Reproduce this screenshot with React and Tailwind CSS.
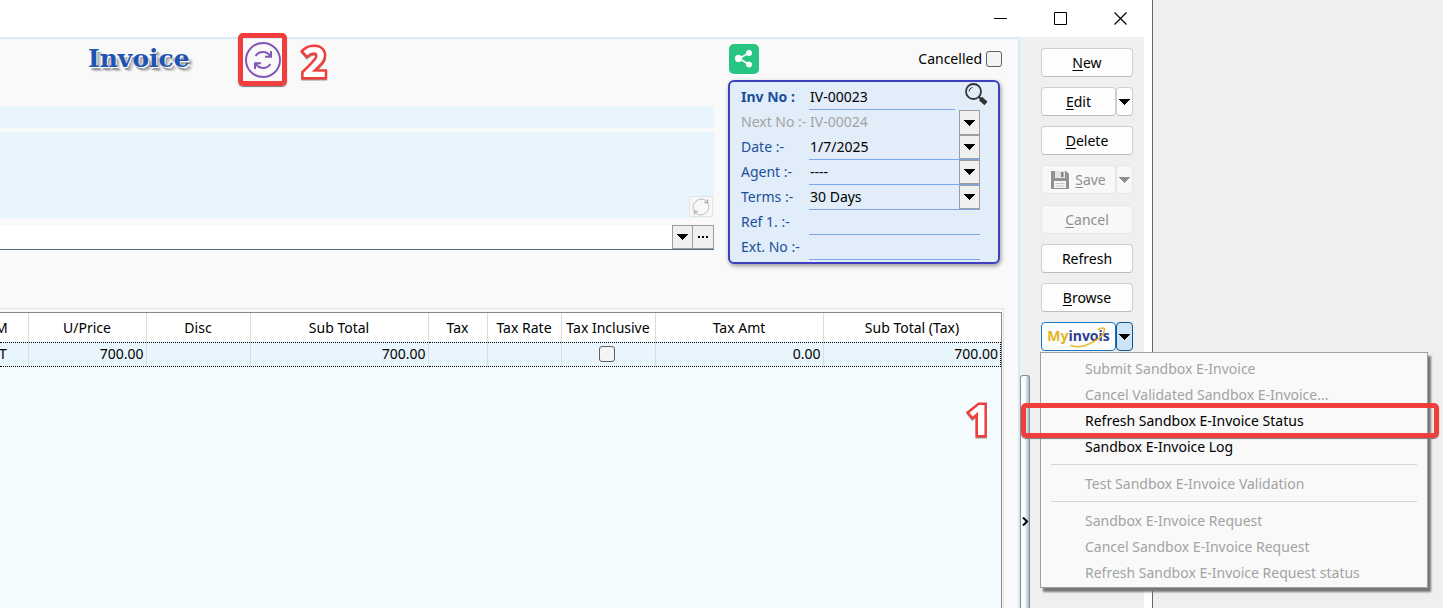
import { useState } from "react";

// Invoice entry window with the e-invoice drop-down menu open.

const COLUMNS = [
  { label: "M", width: "w-[28px]" },
  { label: "U/Price", width: "w-[118px]" },
  { label: "Disc", width: "w-[104px]" },
  { label: "Sub Total", width: "w-[178px]" },
  { label: "Tax", width: "w-[59px]" },
  { label: "Tax Rate", width: "w-[74px]" },
  { label: "Tax Inclusive", width: "w-[94px]" },
  { label: "Tax Amt", width: "w-[168px]" },
  { label: "Sub Total (Tax)", width: "" },
];

const ROW = ["T", "700.00", "", "700.00", "", "", "check", "0.00", "700.00"];

const MENU = [
  { label: "Submit Sandbox E-Invoice" },
  { label: "Cancel Validated Sandbox E-Invoice..." },
  { label: "Refresh Sandbox E-Invoice Status", enabled: true, marked: true },
  { label: "Sandbox E-Invoice Log", enabled: true },
  null,
  { label: "Test Sandbox E-Invoice Validation" },
  null,
  { label: "Sandbox E-Invoice Request" },
  { label: "Cancel Sandbox E-Invoice Request" },
  { label: "Refresh Sandbox E-Invoice Request status" },
];

const SIDE_BUTTON =
  "h-[29px] rounded-[4px] border border-[#cfcfcf] border-b-[#bdbdbd] bg-[#fdfdfd] text-black disabled:border-[#e6e6e6] disabled:bg-[#f8f8f8] disabled:text-[#8f8f8f]";

function Caret({ className = "fill-black" }) {
  return (
    <svg className={className} width="11" height="6" viewBox="0 0 11 6" shapeRendering="crispEdges">
      <path d="M0 0h11L5.5 6z" />
    </svg>
  );
}

function ArrowBox() {
  return (
    <span className="flex w-[21px] shrink-0 items-center justify-center self-stretch border border-[#9d9d9d] bg-[#f0f0f0]">
      <Caret />
    </span>
  );
}

function Checkbox({ id, label }) {
  return (
    <input
      id={id}
      type="checkbox"
      aria-label={label}
      className="block size-4 appearance-none rounded-[3px] border border-[#5f5f5f] bg-[#f4f4f4]"
    />
  );
}

// Outlined number used to mark a step
function StepNumber({ children }) {
  return (
    <span className="block text-[42px] leading-10 font-bold text-white [-webkit-text-stroke:5px_#f23d3d] [paint-order:stroke_fill] drop-shadow-[0_1px_0_#999999]">
      {children}
    </span>
  );
}

function StepFrame({ className }) {
  return (
    <span
      className={`pointer-events-none absolute rounded-[5px] border-[5px] border-[#f23d3d] shadow-[0_1px_1px_#777777] ${className}`}
    />
  );
}

function TitleBar() {
  return (
    <div className="flex h-[37px] shrink-0 justify-end bg-white pr-0.5">
      <button className="flex w-[60px] items-center justify-center" aria-label="Minimize">
        <svg width="13" height="13" viewBox="0 0 13 13" stroke="#000">
          <path d="M0 6.5h13" />
        </svg>
      </button>
      <button className="flex w-[60px] items-center justify-center" aria-label="Maximize">
        <svg width="13" height="13" viewBox="0 0 13 13" fill="none" stroke="#000">
          <path d="M.5.5h12v12H.5z" />
        </svg>
      </button>
      <button className="flex w-[60px] items-center justify-center" aria-label="Close">
        <svg width="13" height="13" viewBox="0 0 13 13" stroke="#000" strokeWidth="1.2">
          <path d="M.5.5l12 12M12.5.5l-12 12" />
        </svg>
      </button>
    </div>
  );
}

function CustomerArea() {
  return (
    <div className="min-w-0 flex-1">
      <div className="flex h-[67px] items-start pl-[88px]">
        <h1 className="mt-1.5 w-[157px] font-['DejaVu_Serif',serif] text-[25px] leading-7 font-bold text-[#1d54b4] [text-shadow:1px_1px_0_#ffffff,2px_3px_1px_#9a9a9a,4px_4px_2px_#bbbbbb]">
          Invoice
        </h1>
        <div className="relative mt-[3px] size-9">
          <button aria-label="Refresh status" className="block">
            <svg width="36" height="36" viewBox="0 0 36 36" fill="none" stroke="#8558b8" strokeWidth="2">
              <circle cx="18" cy="18" r="17" />
              <path d="M10.6 14A8.6 8.6 0 0 1 25.4 14.4M26 9v5.8h-6" />
              <path d="M25.4 22A8.6 8.6 0 0 1 10.6 21.6M10 27v-5.8h6" />
            </svg>
          </button>
          <StepFrame className="-top-[9px] -right-1.5 -bottom-2 -left-[7px]" />
        </div>
        <div className="ml-[21px] mt-0.5">
          <StepNumber>2</StepNumber>
        </div>
      </div>
      <div className="h-[22px] bg-[#e8f5fc]" />
      <div className="mt-1 flex h-[86px] items-end justify-end bg-[#e8f5fc] pr-px pb-px">
        <button
          aria-label="Reload address"
          className="flex h-[21px] w-6 items-center justify-center rounded-[3px] border border-[#e4e4e4] bg-[#f8f8f8]"
        >
          <svg width="18" height="18" viewBox="0 0 18 18" fill="none" stroke="#b8b8b8">
            <path d="M2.2 13A8 8 0 0 1 14 2.8M15.8 5A8 8 0 0 1 4 15.2" />
            <path d="M12.5 4.5h3v-3M5.5 13.5h-3v3" stroke="#a8a8a8" strokeWidth="1.5" />
          </svg>
        </button>
      </div>
      <div className="mt-[7px] flex h-[25px] border-b border-[#4f6f85]">
        <input aria-label="Customer" className="min-w-0 flex-1 bg-white px-1 outline-none" />
        <button aria-label="Open customer list" className="flex">
          <ArrowBox />
        </button>
        <button
          aria-label="More"
          className="flex w-[21px] items-center justify-center border border-l-0 border-[#9d9d9d] bg-[#f0f0f0]"
        >
          <svg width="10" height="2" viewBox="0 0 10 2">
            <path d="M0 0h2v2H0zM4 0h2v2H4zM8 0h2v2H8z" />
          </svg>
        </button>
      </div>
    </div>
  );
}

function Field({ id, label, children, labelClass = "text-[#1b4f9c]" }) {
  return (
    <div className="flex h-[25px] items-center">
      <label htmlFor={id} className={`w-[68px] shrink-0 pb-0.5 whitespace-nowrap ${labelClass}`}>
        {label}
      </label>
      {children}
    </div>
  );
}

const LINE = "flex h-full min-w-0 flex-1 border-b border-[#7ba7ea]";
const VALUE = "min-w-0 flex-1 appearance-none bg-transparent pl-px outline-none";

function DocumentInfo() {
  const [date, setDate] = useState("1/7/2025");

  return (
    <div className="w-[272px] shrink-0">
      <div className="-mr-0.5 flex h-[41px] items-start justify-between pt-[5px]">
        <button
          aria-label="Share"
          className="ml-px flex size-[30px] items-center justify-center rounded-[5px] bg-[#27c581]"
        >
          <svg width="20" height="20" viewBox="0 0 20 20" fill="#fff" stroke="#fff">
            <path d="M15 4L5 9.5 15 15.5" fill="none" strokeWidth="1.5" />
            <circle cx="4.5" cy="9.5" r="3.2" />
            <circle cx="15" cy="4" r="2.6" />
            <circle cx="15" cy="15.5" r="2.6" />
          </svg>
        </button>
        <label htmlFor="cancelled" className="mt-[5px] flex items-center gap-1">
          Cancelled
          <Checkbox id="cancelled" />
        </label>
      </div>
      <div className="rounded-[6px] border-2 border-[#3e40bf] bg-[#e1edf9] pt-[3px] pr-[18px] pb-0.5 pl-[11px] shadow-[1px_2px_4px_#9a9a9a]">
        <Field id="invNo" label="Inv No :" labelClass="font-bold text-[#1b4f9c]">
          <div className={LINE}>
            <input id="invNo" defaultValue="IV-00023" className={VALUE} />
          </div>
          <button aria-label="Search invoice" className="-mt-0.5 -mr-2 ml-[9px] shrink-0 self-start">
            <svg width="24" height="24" viewBox="0 0 24 24" fill="none" stroke="#333">
              <circle cx="9.5" cy="8.5" r="7.5" strokeWidth="1.8" />
              <path d="M5 8.5a4.5 4.5 0 0 1 3.500-4.200" strokeWidth="1" />
              <path d="M15 14l2 2" strokeWidth="2" />
              <path d="M16.5 15.5l5.500 5" strokeWidth="4.5" />
            </svg>
          </button>
        </Field>
        <Field id="nextNo" label="Next No :-" labelClass="text-[#a3a3a3]">
          <div className="flex h-full min-w-0 flex-1">
            <select id="nextNo" disabled className={`${VALUE} pb-0.5 text-[#a3a3a3] opacity-100`}>
              <option>IV-00024</option>
            </select>
            <ArrowBox />
          </div>
        </Field>
        <Field id="date" label="Date :-">
          <div className={LINE}>
            <input id="date" value={date} onChange={(e) => setDate(e.target.value)} className={VALUE} />
            <button aria-label="Pick date" className="flex">
              <ArrowBox />
            </button>
          </div>
        </Field>
        <Field id="agent" label="Agent :-">
          <div className={LINE}>
            <select id="agent" className={VALUE}>
              <option>----</option>
            </select>
            <ArrowBox />
          </div>
        </Field>
        <Field id="terms" label="Terms :-">
          <div className={LINE}>
            <select id="terms" className={VALUE}>
              <option>30 Days</option>
            </select>
            <ArrowBox />
          </div>
        </Field>
        <Field id="ref1" label="Ref 1. :-">
          <div className={LINE}>
            <input id="ref1" className={VALUE} />
          </div>
        </Field>
        <Field id="extNo" label="Ext. No :-">
          <div className={LINE}>
            <input id="extNo" className={VALUE} />
          </div>
        </Field>
      </div>
    </div>
  );
}

function ItemGrid() {
  return (
    <div className="mt-11 mr-3.5 flex flex-1 flex-col border-t border-r border-[#e2e2e2] pt-[3px] pr-px">
      <div className="relative flex-1 border-t border-r border-[#83868f] bg-[#f4fcff]">
        <table className="w-full table-fixed border-collapse">
          <thead>
            <tr className="h-[29px] bg-white">
              {COLUMNS.map((col) => (
                <th
                  key={col.label}
                  scope="col"
                  className={`border-r border-[#dcdcdc] p-0 pt-0.5 font-normal whitespace-nowrap last:border-r-0 ${col.width}`}
                >
                  <div className={col.label === "M" ? "-ml-[5px] text-left" : ""}>{col.label}</div>
                </th>
              ))}
            </tr>
          </thead>
          <tbody>
            <tr className="h-6 bg-[#e8f5fc]">
              {ROW.map((cell, i) => (
                <td
                  key={i}
                  className="border-y border-r border-y-black border-r-[#dcdcdc] p-0 pr-0.5 text-right [border-bottom-style:dotted] [border-top-style:dotted] last:border-r-black last:[border-right-style:dotted]"
                >
                  {cell === "check" ? (
                    <div className="flex justify-center">
                      <Checkbox label="Tax inclusive" />
                    </div>
                  ) : (
                    <div className={i === 0 ? "-ml-px text-left" : ""}>{cell}</div>
                  )}
                </td>
              ))}
            </tr>
          </tbody>
        </table>
        <div className="absolute top-[86px] right-2.5">
          <StepNumber>1</StepNumber>
        </div>
      </div>
    </div>
  );
}

function HotLabel({ text }) {
  return (
    <span>
      <span className="underline underline-offset-2">{text[0]}</span>
      {text.slice(1)}
    </span>
  );
}

function EInvoiceMenu() {
  return (
    <div
      role="menu"
      className="absolute top-[30px] -left-px z-10 w-[388px] border border-[#a0a0a0] bg-[#f9f9f9] pt-[3px] pb-px shadow-[3px_4px_2px_#777777]"
    >
      {MENU.map((item, i) =>
        item ? (
          <div key={item.label} className="relative">
            <button
              role="menuitem"
              disabled={!item.enabled}
              className="block h-[26px] w-full pl-11 text-left text-black disabled:text-[#a3a3a3]"
            >
              {item.label}
            </button>
            {item.marked && <StepFrame className="-top-[5px] -right-3 -bottom-1 -left-5" />}
          </div>
        ) : (
          <div key={i} className="mx-2.5 h-[11px] pt-1">
            <hr className="border-[#d5d5d5]" />
          </div>
        )
      )}
    </div>
  );
}

function Sidebar() {
  return (
    <div className="flex shrink-0 bg-[#efefef]">
      <div className="mt-[338px] flex w-2.5 flex-col items-center rounded-t-[3px] border border-b-0 border-[#8c8c8c] bg-linear-to-r from-white from-45% to-[#9dbdd3] pt-[141px]">
        <svg width="7" height="9" viewBox="0 0 7 9" fill="none" stroke="#000" strokeWidth="2">
          <path d="M1 .5l4 4-4 4" />
        </svg>
      </div>
      <div className="mx-[11px] flex w-[92px] flex-col gap-2.5 pt-[11px]">
        <button className={SIDE_BUTTON}>
          <HotLabel text="New" />
        </button>
        <div className="flex">
          <button className={`${SIDE_BUTTON} flex-1`}>
            <HotLabel text="Edit" />
          </button>
          <button aria-label="Edit options" className={`${SIDE_BUTTON} flex w-[17px] items-center justify-center`}>
            <Caret />
          </button>
        </div>
        <button className={SIDE_BUTTON}>
          <HotLabel text="Delete" />
        </button>
        <div className="flex pb-px">
          <button disabled className={`${SIDE_BUTTON} flex flex-1 items-center justify-center gap-1.5`}>
            <svg width="18" height="18" viewBox="0 0 18 18">
              <path d="M0 0h15l3 3v15H0z" fill="#919191" />
              <path d="M4 0h10v7H4z" fill="#e4e4e4" />
              <path d="M10 1h2.500v5H10z" fill="#858585" />
              <path d="M3 10h12v7H3z" fill="#f4f4f4" />
              <path d="M4.5 12.500h9M4.500 15h9" stroke="#c4c4c4" />
            </svg>
            <HotLabel text="Save" />
          </button>
          <button
            disabled
            aria-label="Save options"
            className={`${SIDE_BUTTON} flex w-[17px] items-center justify-center`}
          >
            <Caret className="fill-[#8f8f8f]" />
          </button>
        </div>
        <button disabled className={SIDE_BUTTON}>
          <HotLabel text="Cancel" />
        </button>
        <button className={SIDE_BUTTON}>Refresh</button>
        <button className={SIDE_BUTTON}>
          <HotLabel text="Browse" />
        </button>
        <div className="relative flex">
          <button className="relative h-[29px] flex-1 rounded-[4px] border border-[#1a78c8] bg-[#fdfdfd] pb-0.5 font-['Open_Sans',sans-serif] text-[14px] leading-5 font-bold text-[#e0b52c]">
            My<span className="text-[#2f3d92]">invois</span>
            <svg className="absolute inset-0" width="73" height="27" viewBox="0 0 73 27" fill="none" stroke="#e6bd35">
              <path d="M29 22.500C40 27 62 16 62.500 6.500c0-2-3-2-6 0" strokeWidth="1.6" strokeLinecap="round" />
            </svg>
          </button>
          <button
            aria-label="E-invoice options"
            aria-expanded="true"
            className="flex h-[29px] w-[17px] items-center justify-center rounded-[4px] border border-[#0d5590] bg-[#cce4f7]"
          >
            <Caret />
          </button>
          <EInvoiceMenu />
        </div>
      </div>
    </div>
  );
}

export default function App() {
  return (
    <div className="flex h-screen overflow-hidden bg-[#efefef] font-['Noto_Sans',sans-serif] text-[14px] leading-5 text-black">
      <div className="flex min-w-0 flex-1 flex-col border-r border-[#666666] bg-white">
        <TitleBar />
        <div className="flex flex-1 pr-2">
          <div className="flex min-w-0 flex-1 flex-col border-t-2 border-r-2 border-[#d5ebfa] bg-[#f9f9f9]">
            <div className="flex gap-3.5 pr-[18px]">
              <CustomerArea />
              <DocumentInfo />
            </div>
            <ItemGrid />
          </div>
          <Sidebar />
        </div>
      </div>
      <div className="w-[290px] shrink-0" />
    </div>
  );
}
